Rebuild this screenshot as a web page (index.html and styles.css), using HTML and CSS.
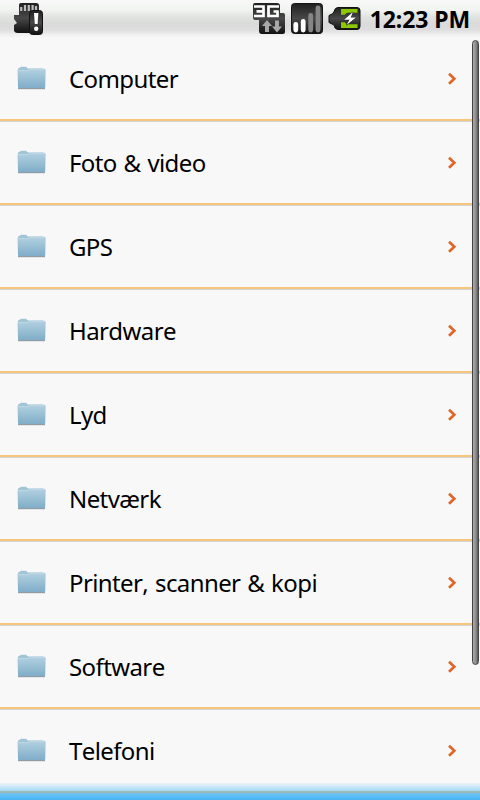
FILE: index.html
```html
<!DOCTYPE html>
<html lang="da">
<head>
<meta charset="utf-8">
<title>Kategorier</title>
<link rel="stylesheet" href="styles.css">
</head>
<body>
<svg width="0" height="0" class="defs">
  <defs>
    <linearGradient id="fold" x1="0" y1="0" x2="0" y2="1"><stop offset="0" stop-color="#b3d1e0"/><stop offset="1" stop-color="#80adc8"/></linearGradient>
    <linearGradient id="dark" x1="0" y1="0" x2="0" y2="1"><stop offset="0" stop-color="#202020"/><stop offset=".5" stop-color="#484848"/><stop offset="1" stop-color="#111"/></linearGradient>
    <symbol id="folder" viewBox="0 0 30 24">
      <path d="M2 5V2.5L4 1.5 5 .7h5l2 1.8h15v3z" fill="#a2c5d6"/>
      <path d="M2 22.6h27" stroke="#929da2" stroke-width="1.2"/>
      <path d="M1.500 4h11l2-1.2h14.500l.7 1-.5 17.5q0 .7-.8.7H2.7q-.7 0-.7-.7z" fill="url(#fold)"/>
      <path d="M2 4.6h10.5l2-1.2h14.500" fill="none" stroke="#bed9e5"/>
    </symbol>
    <symbol id="chev" viewBox="0 0 12 14">
      <path d="M2 1.800l5.3 5-5.3 5" fill="none" stroke="#e0652a" stroke-width="2.7"/>
    </symbol>
  </defs>
</svg>
<main class="screen">
  <header class="status">
    <svg class="sd" width="32" height="35" viewBox="0 0 32 35">
      <path d="M8 3h15q3 0 3 3v27H5q-4 0-4-3v-5l3-2-3-4v-4h5V5q0-2 2-2z" fill="url(#dark)"/>
      <path d="M8.2 7v4M12 5v6M15.8 5v6M19.6 5v6M23 6v4" stroke="#bbb" stroke-width="2.2"/>
      <rect x="16.5" y="10.5" width="13" height="24" rx="3" fill="url(#dark)" stroke="#111"/>
      <path d="M21 13h4.4l-.8 11h-2.8z" fill="#fff"/><circle cx="23.2" cy="28.7" r="2.2" fill="#fff"/>
    </svg>
    <svg class="net" width="34" height="35" viewBox="0 0 34 35">
      <path d="M3 3h22q3 0 3 3v7h3q2 0 2 2v17q0 2-2 2H10q-3 0-3-3V20H3q-2 0-2-2V5q0-2 2-2z" fill="url(#dark)"/>
      <path d="M2 6.500h9.500v9.500H2M4.500 11.300h7M27 6.500H16.500v9.500h9v-4.500h-4" fill="none" stroke="#fff" stroke-width="2.7"/>
      <path d="M15 20l-5 6h3v6h4v-6h3zM25 32.500l5-6h-3v-6h-4v6h-3z" fill="#a8a8a8"/>
    </svg>
    <svg class="sig" width="32" height="35" viewBox="0 0 32 35">
      <rect x=".5" y="3.5" width="31" height="30" rx="3" fill="url(#dark)" stroke="#151515"/>
      <g stroke-width="4.800" stroke-linecap="round"><path d="M4.800 24.500v5.500M12.200 21.500v8.500" stroke="#fff"/><path d="M19.700 15.500v14.500M27 7.800v22.200" stroke="#858585"/></g>
    </svg>
    <svg class="bat" width="33" height="34" viewBox="0 0 33 34">
      <path d="M10 7.500h19q3 0 3 3v16q0 3-3 3H10q-3 0-4-4l-1-1-4-2v-7l4-2 1-2q1-4 4-4z" fill="url(#dark)" stroke="#111"/>
      <path d="M13 9h16.500v3.800H19l-2.500 2H13zM13 28h16.500v-3.800H19l-2.500-2H13z" fill="#8cc800"/>
      <path d="M25 12l-9 7.800h5.500l-3 5.200 9.500-7.500h-5.300z" fill="#fff" stroke="#222" stroke-width="1" paint-order="stroke"/>
    </svg>
    <time class="clock">12:23 PM</time>
  </header>
  <ul class="list">
    <li class="row"><svg class="folder"><use href="#folder"/></svg><span class="label">Computer</span><svg class="chev"><use href="#chev"/></svg></li>
    <li class="row"><svg class="folder"><use href="#folder"/></svg><span class="label">Foto &amp; video</span><svg class="chev"><use href="#chev"/></svg></li>
    <li class="row"><svg class="folder"><use href="#folder"/></svg><span class="label">GPS</span><svg class="chev"><use href="#chev"/></svg></li>
    <li class="row"><svg class="folder"><use href="#folder"/></svg><span class="label">Hardware</span><svg class="chev"><use href="#chev"/></svg></li>
    <li class="row"><svg class="folder"><use href="#folder"/></svg><span class="label">Lyd</span><svg class="chev"><use href="#chev"/></svg></li>
    <li class="row"><svg class="folder"><use href="#folder"/></svg><span class="label">Netværk</span><svg class="chev"><use href="#chev"/></svg></li>
    <li class="row"><svg class="folder"><use href="#folder"/></svg><span class="label">Printer, scanner &amp; kopi</span><svg class="chev"><use href="#chev"/></svg></li>
    <li class="row"><svg class="folder"><use href="#folder"/></svg><span class="label">Software</span><svg class="chev"><use href="#chev"/></svg></li>
    <li class="row"><svg class="folder"><use href="#folder"/></svg><span class="label">Telefoni</span><svg class="chev"><use href="#chev"/></svg></li>
  </ul>
  <div class="scrollbar"></div>
  <div class="glow"></div>
</main>
</body>
</html>
```
FILE: styles.css
```css
* { box-sizing: border-box; }
body { margin: 0; font-family: "Noto Sans", sans-serif; color: #000; }
.defs { position: absolute; }
.screen { position: relative; width: 480px; height: 800px; overflow: hidden; background: #f8f8f8; }
.status {
  display: flex; height: 38px; padding: 0 10px 0 13px;
  background: linear-gradient(#f8f8f8 0, #f1f4f0 10px, #e1e3e1 17px, #d9dad9 24px, #dedede 30px, #f1f1f1 35px, #f8f8f8 38px);
}
.status svg { flex: none; }
.net { margin-left: 207px; }
.sig { margin-left: 5px; }
.bat { margin-left: 5px; }
.clock { margin-left: auto; font-size: 23px; font-weight: 700; line-height: 39px; letter-spacing: -0.1px; white-space: nowrap; }
.list { margin: 0; padding: 0; list-style: none; }
.row {
  display: flex; align-items: center; height: 84px; padding: 0 21px 0 16px;
  border-bottom: 1px solid #d3d5da; box-shadow: inset 0 -2px #f7c57b;
}
.folder { width: 30px; height: 24px; margin: 0 23px 3px 0; }
.label { flex: 1; margin-bottom: 2px; font-size: 24px; line-height: 36px; letter-spacing: -0.6px; word-spacing: 1.2px; font-kerning: none; white-space: nowrap; }
.chev { width: 12px; height: 14px; margin-bottom: 1px; }
.scrollbar {
  position: absolute; left: 472px; top: 40px; width: 7px; height: 625px;
  border: 1px solid #444; border-radius: 4px;
  background: linear-gradient(90deg, #aaa, #8b8b8b 60%, #555);
}
.glow {
  position: absolute; left: 0; right: 0; bottom: 0; height: 17px;
  background: linear-gradient(rgba(60, 176, 245, .05), rgba(60, 176, 245, .45) 8px, rgba(60, 176, 245, .5) 10px, rgba(60, 176, 245, .75) 11px, rgba(60, 176, 245, .95));
}
```
